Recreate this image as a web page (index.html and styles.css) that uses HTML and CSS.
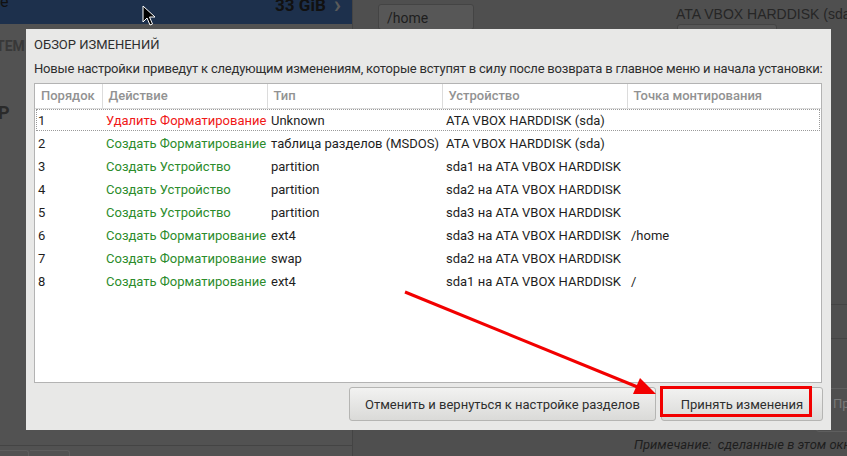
FILE: index.html
```html
<!DOCTYPE html>
<html lang="ru">
<head>
  <meta charset="UTF-8" />
  <title>Обзор изменений</title>
  <link rel="stylesheet" href="styles.css">
</head>
<body>
  <div class="screen">
    <!-- левая панель установщика (затемнена) -->
    <div class="left-panel">
      <div class="disk-bar">
        <span class="bar-label">e</span>
        <span class="bar-size">33 GiB</span>
        <span class="bar-chevron">&#x203A;</span>
      </div>
      <div class="section-label">ТЕМ</div>
      <div class="big-letter">Р</div>
      <div class="left-bottom">
        <span class="tab"></span>
        <span class="tab wide"></span>
      </div>
    </div>

    <!-- правая панель -->
    <div class="right-panel">
      <div class="top-row">
        <div class="field home-field">/home</div>
        <div class="device">
          <div class="device-name">ATA VBOX HARDDISK (sda)</div>
          <div class="field device-field"></div>
        </div>
      </div>
      <div class="side-lines">
        <div class="side-line"></div>
        <div class="side-line"></div>
      </div>
      <div class="side-button">Пр</div>
      <div class="note">Примечание:&nbsp; сделанные в этом окне</div>
    </div>
  </div>

  <!-- диалог -->
  <div class="dialog">
    <h2 class="dialog-title">ОБЗОР ИЗМЕНЕНИЙ</h2>
    <p class="dialog-text">Новые настройки приведут к следующим изменениям, которые вступят в силу после возврата в главное меню и начала установки:</p>

    <div class="table-box">
      <table class="changes">
        <thead>
          <tr>
            <th class="c-order">Порядок</th>
            <th class="c-action">Действие</th>
            <th class="c-type">Тип</th>
            <th class="c-device">Устройство</th>
            <th class="c-mount">Точка монтирования</th>
          </tr>
        </thead>
        <tbody>
          <tr class="focused">
            <td>1</td><td class="destroy">Удалить Форматирование</td><td>Unknown</td><td>ATA VBOX HARDDISK (sda)</td><td></td>
          </tr>
          <tr>
            <td>2</td><td class="create">Создать Форматирование</td><td>таблица разделов (MSDOS)</td><td>ATA VBOX HARDDISK (sda)</td><td></td>
          </tr>
          <tr>
            <td>3</td><td class="create">Создать Устройство</td><td>partition</td><td>sda1 на ATA VBOX HARDDISK</td><td></td>
          </tr>
          <tr>
            <td>4</td><td class="create">Создать Устройство</td><td>partition</td><td>sda2 на ATA VBOX HARDDISK</td><td></td>
          </tr>
          <tr>
            <td>5</td><td class="create">Создать Устройство</td><td>partition</td><td>sda3 на ATA VBOX HARDDISK</td><td></td>
          </tr>
          <tr>
            <td>6</td><td class="create">Создать Форматирование</td><td>ext4</td><td>sda3 на ATA VBOX HARDDISK</td><td>/home</td>
          </tr>
          <tr>
            <td>7</td><td class="create">Создать Форматирование</td><td>swap</td><td>sda2 на ATA VBOX HARDDISK</td><td></td>
          </tr>
          <tr>
            <td>8</td><td class="create">Создать Форматирование</td><td>ext4</td><td>sda1 на ATA VBOX HARDDISK</td><td>/</td>
          </tr>
        </tbody>
      </table>
    </div>

    <div class="dialog-buttons">
      <button class="btn btn-cancel">Отменить и вернуться к настройке разделов</button>
      <button class="btn btn-accept">Принять изменения<span class="highlight"></span></button>
    </div>
  </div>

  <!-- красная стрелка-пометка -->
  <svg class="annotation" width="847" height="456" viewBox="0 0 847 456">
    <line x1="405" y1="292" x2="640" y2="388" stroke="#f20000" stroke-width="3" />
    <polygon points="656,394 633,394 640,378" fill="#f20000" />
  </svg>

  <!-- курсор -->
  <svg class="cursor" width="14" height="22" viewBox="0 0 14 22">
    <path d="M1 1 L1 17 L5 13 L8 20 L10.5 19 L7.5 12 L13 12 Z" fill="#000" stroke="#fff" stroke-width="1" />
  </svg>
</body>
</html>
```

FILE: styles.css
```css
body {
  margin: 0;
  width: 847px;
  height: 456px;
  overflow: hidden;
  position: relative;
  font-family: Roboto, sans-serif;
  background-color: #4f4f4f;
}

.screen {
  display: flex;
  height: 456px;
}

/* левая панель */

.left-panel {
  width: 352px;
  flex-shrink: 0;
  border-right: 1px solid #444;
  background-color: #525252;
  display: flex;
  flex-direction: column;
}

.disk-bar {
  height: 24px;
  background-color: #1d304c;
  display: flex;
  align-items: flex-start;
  color: #111;
}

.bar-label {
  font-size: 16px;
  line-height: 12px;
  margin-top: -4px;
  flex: 1;
}

.bar-size {
  font-size: 17px;
  font-weight: bold;
  line-height: 12px;
  margin-top: -1px;
}

.bar-chevron {
  color: #5a5a5a;
  font-size: 24px;
  font-weight: bold;
  line-height: 12px;
  margin: -1px 11px 0 8px;
}

.section-label {
  margin-top: 14px;
  margin-left: -4px;
  font-size: 14px;
  font-weight: bold;
  color: #383838;
}

.big-letter {
  margin-top: 48px;
  font-size: 18px;
  font-weight: bold;
  color: #2a2a2a;
  margin-left: -2px;
}

.left-bottom {
  margin-top: auto;
  border-top: 1px solid #444;
  height: 10px;
  display: flex;
  align-items: flex-end;
  gap: 1px;
}

.tab {
  width: 28px;
  height: 5px;
  border: 1px solid #5e5e5e;
  border-bottom: none;
  border-left: none;
  border-radius: 0 3px 0 0;
}

.tab.wide {
  width: 39px;
}

/* правая панель */

.right-panel {
  flex: 1;
  min-width: 0;
  overflow: hidden;
  display: flex;
  flex-direction: column;
  padding-left: 25px;
}

.top-row {
  display: flex;
  align-items: flex-start;
  height: 56px;
}

.field {
  background-color: #575757;
  border: 1px solid #444;
  border-radius: 3px;
  flex-shrink: 0;
}

.home-field {
  width: 86px;
  height: 24px;
  margin-top: 4px;
  padding-left: 8px;
  font-size: 14px;
  line-height: 26px;
  color: #1e1e1e;
}

.device {
  margin-left: 202px;
  flex-shrink: 0;
}

.device-name {
  font-family: "Liberation Sans", sans-serif;
  font-size: 14px;
  line-height: 16px;
  margin-top: 6px;
  color: #262626;
  white-space: nowrap;
}

.device-field {
  width: 98px;
  height: 30px;
  margin-top: 2px;
  margin-left: 1px;
}

.side-lines {
  margin-top: 248px;
  margin-left: 453px;
}

.side-line {
  height: 33px;
  border-top: 1px solid #444;
}

.side-button {
  margin-top: 16px;
  margin-left: 438px;
  width: 60px;
  height: 44px;
  padding-left: 16px;
  border: 1px solid #5e5e5e;
  border-radius: 3px;
  color: #7a7a7a;
  font-size: 13px;
  line-height: 30px;
  box-sizing: border-box;
  flex-shrink: 0;
}

.note {
  margin-top: 5px;
  margin-left: 256px;
  font-style: italic;
  font-size: 13px;
  color: #1e1e1e;
  white-space: nowrap;
}

/* диалог */

.dialog {
  position: absolute;
  left: 26px;
  top: 29px;
  width: 805px;
  height: 401px;
  box-sizing: border-box;
  padding: 8px 9px 9px 8px;
  background-color: #e8e8e7;
  display: flex;
  flex-direction: column;
}

.dialog-title {
  margin: 0;
  font-size: 13px;
  font-weight: normal;
  line-height: 16px;
  color: #2e2e2e;
}

.dialog-text {
  margin: 8px 0 6px;
  font-size: 13px;
  line-height: 16px;
  letter-spacing: -0.2px;
  color: #2e2e2e;
  white-space: nowrap;
}

.table-box {
  height: 300px;
  flex-shrink: 0;
  box-sizing: border-box;
  border: 1px solid #b3b3b3;
  background-color: #fff;
  overflow: hidden;
}

.changes {
  width: 100%;
  table-layout: fixed;
  border-collapse: collapse;
  font-size: 13px;
  color: #1e1e1e;
}

.changes th {
  box-sizing: border-box;
  height: 24px;
  padding: 0 0 0 6px;
  text-align: left;
  font-weight: 500;
  color: #929292;
  border-left: 1px solid #dcdcdc;
  border-bottom: 1px solid #dcdcdc;
  white-space: nowrap;
  overflow: hidden;
}

.changes th:first-child {
  border-left: none;
}

.c-order { width: 67px; }
.c-action { width: 165px; }
.c-type { width: 175px; }
.c-device { width: 185px; }

.changes td {
  height: 23px;
  padding: 0 0 0 4px;
  white-space: nowrap;
}

.changes td:first-child {
  padding-left: 3px;
}

.changes tr.focused {
  outline: 1px dotted #9a9a9a;
  outline-offset: -2px;
}

.destroy {
  color: #f01818;
}

.create {
  color: #2c8c2c;
}

.dialog-buttons {
  display: flex;
  justify-content: flex-end;
  gap: 5px;
  margin-top: 4px;
  margin-right: -1px;
}

.btn {
  position: relative;
  height: 34px;
  padding: 0;
  border: 1px solid #b5b5b3;
  border-radius: 3px;
  background: linear-gradient(#f2f2f1, #dadad8);
  font-family: Roboto, sans-serif;
  font-size: 13px;
  color: #2e2e2e;
  white-space: nowrap;
}

.btn-cancel {
  width: 307px;
}

.btn-accept {
  width: 162px;
}

.highlight {
  position: absolute;
  left: -2px;
  top: -2px;
  width: 152px;
  height: 31px;
  box-sizing: border-box;
  border: 3px solid #f20000;
}

.annotation {
  position: absolute;
  left: 0;
  top: 0;
}

.cursor {
  position: absolute;
  left: 142px;
  top: 5px;
}
```
